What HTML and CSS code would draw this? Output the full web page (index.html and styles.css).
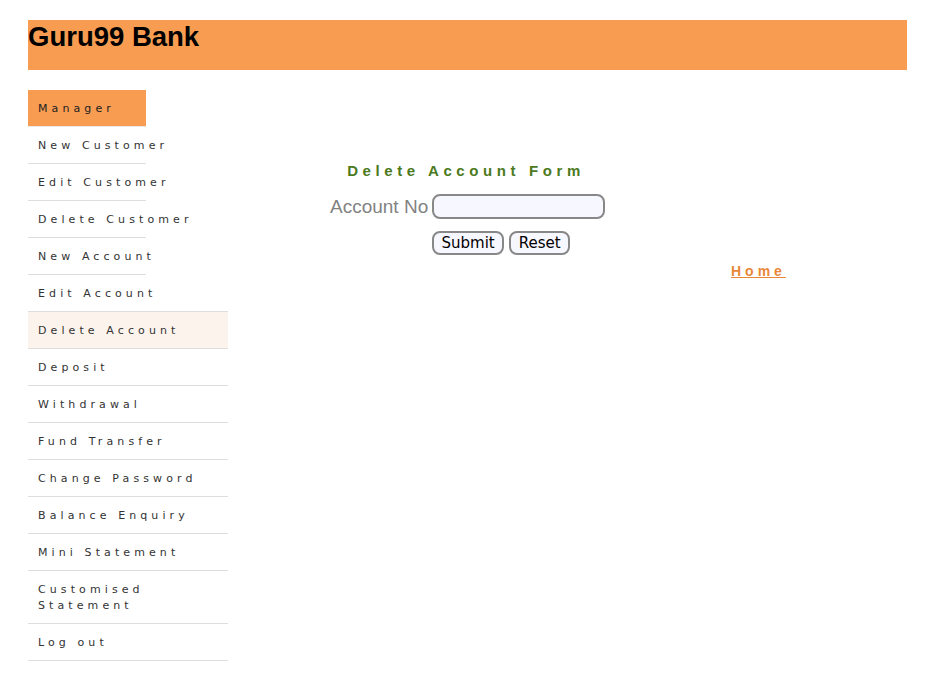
FILE: index.html
```html
<!DOCTYPE html>
<html>
<head>
<meta charset="utf-8">
<link rel="stylesheet" href="styles.css">
</head>
<body>
<div class="page">
  <div class="header"><h2 class="title">Guru99 Bank</h2></div>
  <div class="content">
    <ul class="menu">
      <li class="item narrow active">Manager</li>
      <li class="item narrow">New Customer</li>
      <li class="item narrow">Edit Customer</li>
      <li class="item narrow">Delete Customer</li>
      <li class="item narrow">New Account</li>
      <li class="item">Edit Account</li>
      <li class="item current">Delete Account</li>
      <li class="item">Deposit</li>
      <li class="item">Withdrawal</li>
      <li class="item">Fund Transfer</li>
      <li class="item">Change Password</li>
      <li class="item">Balance Enquiry</li>
      <li class="item">Mini Statement</li>
      <li class="item">Customised Statement</li>
      <li class="item">Log out</li>
    </ul>
    <div class="main">
      <form class="form">
        <p class="heading">Delete Account Form</p>
        <div class="row">
          <label class="label">Account No</label>
          <input class="field" type="text">
        </div>
        <div class="buttons">
          <button type="button" class="btn">Submit</button>
          <button type="button" class="btn">Reset</button>
        </div>
      </form>
      <div class="home"><a class="homelink" href="#">Home </a></div>
    </div>
  </div>
</div>
</body>
</html>
```

FILE: styles.css
```css
html, body {
  margin: 0;
  padding: 0;
  background: #ffffff;
}
.page {
  padding: 20px 28px 0 28px;
}
.header {
  background: #f89c51;
  height: 50px;
}
.title {
  margin: 0;
  padding-top: 2px;
  font-family: "Liberation Sans", Arial, sans-serif;
  font-weight: bold;
  font-size: 27.5px;
  line-height: 30px;
  color: #000;
}
.content {
  display: flex;
  margin-top: 20px;
}
.menu {
  list-style: none;
  margin: 0;
  padding: 0;
  width: 200px;
  flex: none;
}
.item {
  box-sizing: border-box;
  width: 200px;
  padding: 11px 10px 9px 10px;
  line-height: 16px;
  border-bottom: 1px solid #dedede;
  font-family: "DejaVu Sans", Verdana, sans-serif;
  font-size: 11px;
  letter-spacing: 4.1px;
  color: #333;
}
.item.narrow {
  width: 118px;
  white-space: nowrap;
}
.item.active {
  background: #f89c51;
  border-bottom-color: #e8e8e8;
  color: #222;
}
.item.current {
  background: #fdf3ed;
}
.main {
  flex: 1;
}
.form {
  margin: 0 0 0 102px;
  width: 276px;
  padding-top: 72px;
}
.heading {
  margin: 0 0 14px 0;
  text-align: center;
  font-family: "Liberation Sans", Arial, sans-serif;
  font-weight: bold;
  font-size: 15px;
  letter-spacing: 4.6px;
  color: #4c7a1c;
  line-height: 18px;
  padding-right: 4px;
}
.row {
  display: flex;
  align-items: center;
  gap: 4px;
}
.label {
  font-family: "Liberation Sans", Arial, sans-serif;
  font-size: 19px;
  color: #828282;
}
.field {
  box-sizing: border-box;
  width: 173px;
  height: 25px;
  border: 2px solid #888;
  border-radius: 8px;
  background: #f7f7ff;
  margin: 0;
}
.buttons {
  display: flex;
  gap: 5px;
  padding-left: 102px;
  margin-top: 12px;
}
.btn {
  box-sizing: border-box;
  height: 24px;
  padding: 0 7.5px;
  border: 2px solid #888;
  border-radius: 8px;
  background: #f7f7ff;
  font-family: "DejaVu Sans", Verdana, sans-serif;
  font-size: 15px;
  color: #000;
  line-height: 18px;
}
.home {
  padding-left: 503px;
  margin-top: 7px;
}
.homelink {
  font-family: "Liberation Sans", Arial, sans-serif;
  font-weight: bold;
  font-size: 14px;
  letter-spacing: 4px;
  color: #e8873a;
  text-decoration: underline;
}
```
